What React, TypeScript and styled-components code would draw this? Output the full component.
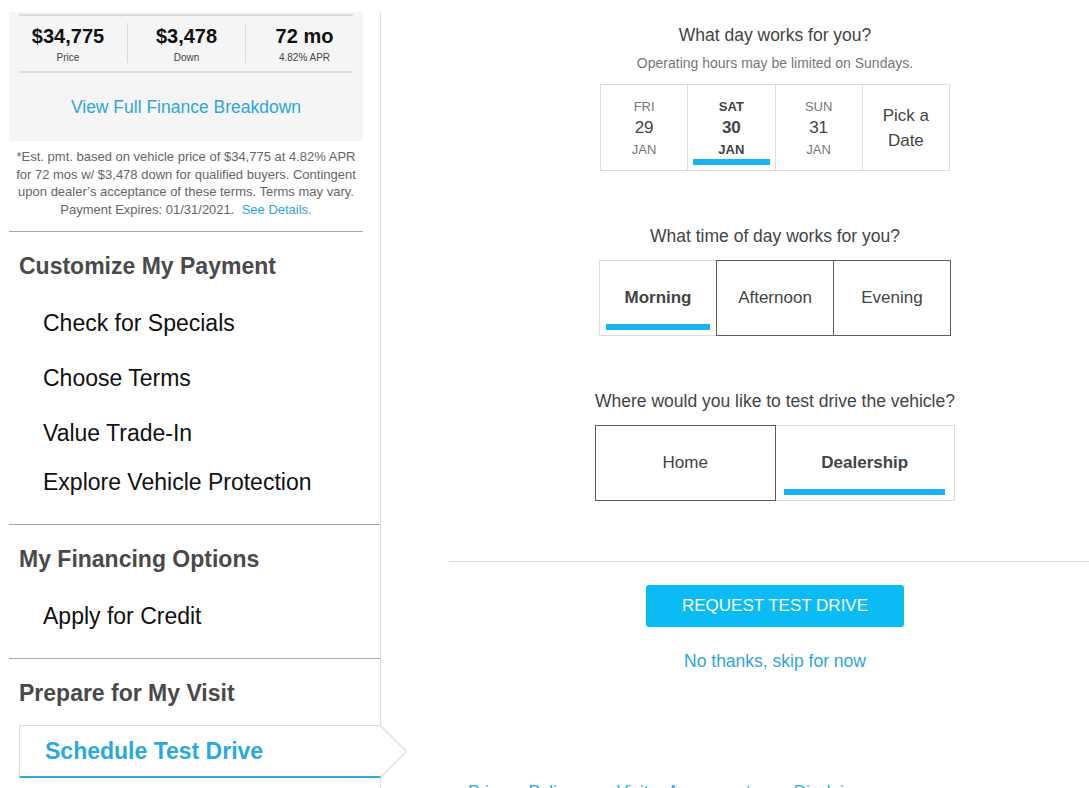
import React from "react";
import styled, { createGlobalStyle } from "styled-components";

const GlobalStyle = createGlobalStyle`
  * { box-sizing: border-box; }
  html, body { margin: 0; padding: 0; background: #fff; overflow: hidden; }
  body { font-family: "Liberation Sans", Arial, sans-serif; color: #222; }
`;

const BLUE = "#2ba7de";
const BAR = "#17b4ee";

const Page = styled.div`
  display: flex;
  align-items: stretch;
  min-height: 100vh;
  padding-left: 9px;
`;

const Sidebar = styled.aside`
  flex: none;
  width: 372px;
  margin-top: 12px;
  border-right: 1px solid #ddd;
  padding-bottom: 20px;
`;

const Summary = styled.section`
  width: 354px;
  background: #f5f5f5;
  padding: 2px 0 24px;
`;

const Rule = styled.div`
  height: 2px;
  margin: 0 10px;
  background: #dcdcdc;
`;

const Stats = styled.div`
  display: grid;
  grid-template-columns: repeat(3, 1fr);
  margin: 7px 0 8px;
`;

const Stat = styled.div`
  height: 40px;
  padding-top: 2px;
  text-align: center;
  & + & {
    border-left: 1px solid #dadada;
  }
`;

const StatValue = styled.div`
  font-size: 20px;
  line-height: 22px;
  font-weight: 700;
  color: #111;
`;

const StatLabel = styled.div`
  margin-top: 5px;
  font-size: 10px;
  line-height: 12px;
  color: #444;
`;

const FinanceLink = styled.a`
  display: block;
  margin-top: 24px;
  font-size: 17.5px;
  line-height: 20px;
  text-align: center;
  color: ${BLUE};
  text-decoration: none;
`;

const Disclaimer = styled.p`
  width: 354px;
  margin: 0;
  padding: 7px 0 12px;
  font-size: 13px;
  line-height: 17.7px;
  color: #666;
  text-align: center;
  white-space: nowrap;
  border-bottom: 1px solid #a8a8a8;
`;

const InlineLink = styled.a`
  color: ${BLUE};
  text-decoration: none;
`;

const NavSection = styled.section`
  padding-bottom: 20px;
  & + & {
    border-top: 1px solid #a8a8a8;
  }
`;

const NavHeading = styled.h3`
  margin: 0;
  padding: 21px 0 0 10px;
  font-size: 23px;
  line-height: 26px;
  font-weight: 700;
  color: #4a4a4a;
`;

const NavItem = styled.a<{ $gap: number }>`
  display: block;
  margin-top: ${(p) => p.$gap}px;
  padding-left: 34px;
  font-size: 23px;
  line-height: 44px;
  color: #111;
  text-decoration: none;
`;

const ActiveItem = styled.a`
  position: relative;
  display: block;
  height: 53px;
  margin: 19px -1px 0 10px;
  padding-left: 25px;
  background: #fff;
  border-top: 1px solid #ddd;
  border-left: 1px solid #ddd;
  border-bottom: 2px solid #35a9dc;
  font-size: 23px;
  line-height: 50px;
  font-weight: 700;
  color: #29a9e1;
  text-decoration: none;
`;

const Pointer = styled.svg`
  position: absolute;
  left: calc(100% - 1px);
  top: -1px;
  width: 28px;
  height: 54px;
  overflow: visible;
`;

const Main = styled.main`
  flex: none;
  width: 652px;
  margin-left: 68px;
  padding-top: 25px;
  display: flex;
  flex-direction: column;
  align-items: center;
`;

const Question = styled.h2<{ $gap?: number }>`
  margin: ${(p) => p.$gap ?? 0}px 0 0;
  font-size: 17.5px;
  line-height: 20px;
  font-weight: 400;
  color: #444;
  text-align: center;
`;

const Hint = styled.p`
  margin: 9px 0 0;
  font-size: 14px;
  line-height: 18px;
  color: #777;
`;

const Choices = styled.div<{ $width: number; $height: number; $gap: number }>`
  display: flex;
  width: ${(p) => p.$width}px;
  height: ${(p) => p.$height}px;
  margin-top: ${(p) => p.$gap}px;
`;

const Choice = styled.button<{ $selected: boolean; $dark: boolean }>`
  position: relative;
  z-index: ${(p) => (p.$dark ? 1 : 0)};
  flex: 1 1 0;
  min-width: 0;
  margin: 0 0 0 -1px;
  padding: 0;
  &:first-child {
    margin-left: 0;
  }
  display: flex;
  flex-direction: column;
  align-items: center;
  justify-content: center;
  background: #fff;
  border: 1px solid ${(p) => (p.$dark ? "#5c5c5c" : "#dddddd")};
  font-family: inherit;
  font-size: 17px;
  line-height: 20px;
  font-weight: ${(p) => (p.$selected ? 700 : 400)};
  color: #444;
  cursor: pointer;
  &::after {
    content: "";
    position: absolute;
    left: 5%;
    right: 5%;
    bottom: 5px;
    height: 6px;
    background: ${(p) => (p.$selected ? BAR : "transparent")};
  }
`;

const DayName = styled.span`
  font-size: 13px;
  line-height: 21px;
  color: inherit;
`;

const DayNum = styled.span`
  font-size: 17px;
  line-height: 22px;
`;

const DateCol = styled.span<{ $selected: boolean }>`
  display: flex;
  flex-direction: column;
  align-items: center;
  color: ${(p) => (p.$selected ? "#444" : "#777")};
  & > span:nth-child(2) {
    color: #444;
  }
`;

const PickDate = styled.span`
  font-size: 17px;
  line-height: 25px;
  font-weight: 400;
  color: #444;
`;

const Divider = styled.hr`
  align-self: stretch;
  margin: 60px 0 0;
  height: 1px;
  border: none;
  background: #dddddd;
`;

const PrimaryButton = styled.button`
  margin-top: 23px;
  width: 258px;
  height: 42px;
  border: none;
  border-radius: 3px;
  background: #0bbcf4;
  color: #fff;
  font-family: inherit;
  font-size: 17px;
  cursor: pointer;
`;

const SkipLink = styled.a`
  margin-top: 24px;
  font-size: 17.5px;
  line-height: 20px;
  color: ${BLUE};
  text-decoration: none;
`;

const Footer = styled.nav`
  align-self: stretch;
  display: flex;
  gap: 43px;
  margin-top: 110px;
  padding-left: 19px;
`;

const FooterLink = styled.a`
  font-size: 17px;
  line-height: 22px;
  color: ${BLUE};
  text-decoration: none;
  white-space: nowrap;
`;

const stats = [
  { value: "$34,775", label: "Price" },
  { value: "$3,478", label: "Down" },
  { value: "72 mo", label: "4.82% APR" },
];

const days = [
  { dow: "FRI", num: "29", mon: "JAN", selected: false },
  { dow: "SAT", num: "30", mon: "JAN", selected: true },
  { dow: "SUN", num: "31", mon: "JAN", selected: false },
];

const times = [
  { label: "Morning", selected: true },
  { label: "Afternoon", selected: false },
  { label: "Evening", selected: false },
];

const places = [
  { label: "Home", selected: false },
  { label: "Dealership", selected: true },
];

export default function App() {
  return (
    <>
      <GlobalStyle />
      <Page>
        <Sidebar>
          <Summary>
            <Rule />
            <Stats>
              {stats.map((s) => (
                <Stat key={s.label}>
                  <StatValue>{s.value}</StatValue>
                  <StatLabel>{s.label}</StatLabel>
                </Stat>
              ))}
            </Stats>
            <Rule />
            <FinanceLink href="#">View Full Finance Breakdown</FinanceLink>
          </Summary>
          <Disclaimer>
            *Est. pmt. based on vehicle price of $34,775 at 4.82% APR
            <br />
            for 72 mos w/ $3,478 down for qualified buyers. Contingent
            <br />
            upon dealer’s acceptance of these terms. Terms may vary.
            <br />
            Payment Expires: 01/31/2021.&nbsp; <InlineLink href="#">See Details.</InlineLink>
          </Disclaimer>

          <NavSection>
            <NavHeading>Customize My Payment</NavHeading>
            <NavItem href="#" $gap={22}>Check for Specials</NavItem>
            <NavItem href="#" $gap={11}>Choose Terms</NavItem>
            <NavItem href="#" $gap={11}>Value Trade-In</NavItem>
            <NavItem href="#" $gap={5}>Explore Vehicle Protection</NavItem>
          </NavSection>
          <NavSection>
            <NavHeading>My Financing Options</NavHeading>
            <NavItem href="#" $gap={22}>Apply for Credit</NavItem>
          </NavSection>
          <NavSection>
            <NavHeading>Prepare for My Visit</NavHeading>
            <ActiveItem href="#">
              Schedule Test Drive
              <Pointer viewBox="0 0 28 54">
                <polygon points="0.5,0.5 26.5,26.5 0.5,52.5" fill="#fff" stroke="none" />
                <polyline points="0.5,0.5 26.5,26.5 0.5,52.5" fill="none" stroke="#dddddd" strokeWidth="1.3" />
              </Pointer>
            </ActiveItem>
          </NavSection>
        </Sidebar>

        <Main>
          <Question>What day works for you?</Question>
          <Hint>Operating hours may be limited on Sundays.</Hint>
          <Choices $width={350} $height={87} $gap={12}>
            {days.map((d) => (
              <Choice key={d.dow} $selected={d.selected} $dark={false}>
                <DateCol $selected={d.selected}>
                  <DayName>{d.dow}</DayName>
                  <DayNum>{d.num}</DayNum>
                  <DayName>{d.mon}</DayName>
                </DateCol>
              </Choice>
            ))}
            <Choice $selected={false} $dark={false}>
              <PickDate>Pick a</PickDate>
              <PickDate>Date</PickDate>
            </Choice>
          </Choices>

          <Question $gap={55}>What time of day works for you?</Question>
          <Choices $width={352} $height={76} $gap={14}>
            {times.map((t) => (
              <Choice key={t.label} $selected={t.selected} $dark={!t.selected}>
                {t.label}
              </Choice>
            ))}
          </Choices>

          <Question $gap={55}>Where would you like to test drive the vehicle?</Question>
          <Choices $width={360} $height={76} $gap={14}>
            {places.map((p) => (
              <Choice key={p.label} $selected={p.selected} $dark={!p.selected}>
                {p.label}
              </Choice>
            ))}
          </Choices>

          <Divider />
          <PrimaryButton>REQUEST TEST DRIVE</PrimaryButton>
          <SkipLink href="#">No thanks, skip for now</SkipLink>

          <Footer>
            <FooterLink href="#">Privacy Policy</FooterLink>
            <FooterLink href="#">Visitor Agreement</FooterLink>
            <FooterLink href="#">Disclaimer</FooterLink>
          </Footer>
        </Main>
      </Page>
    </>
  );
}
